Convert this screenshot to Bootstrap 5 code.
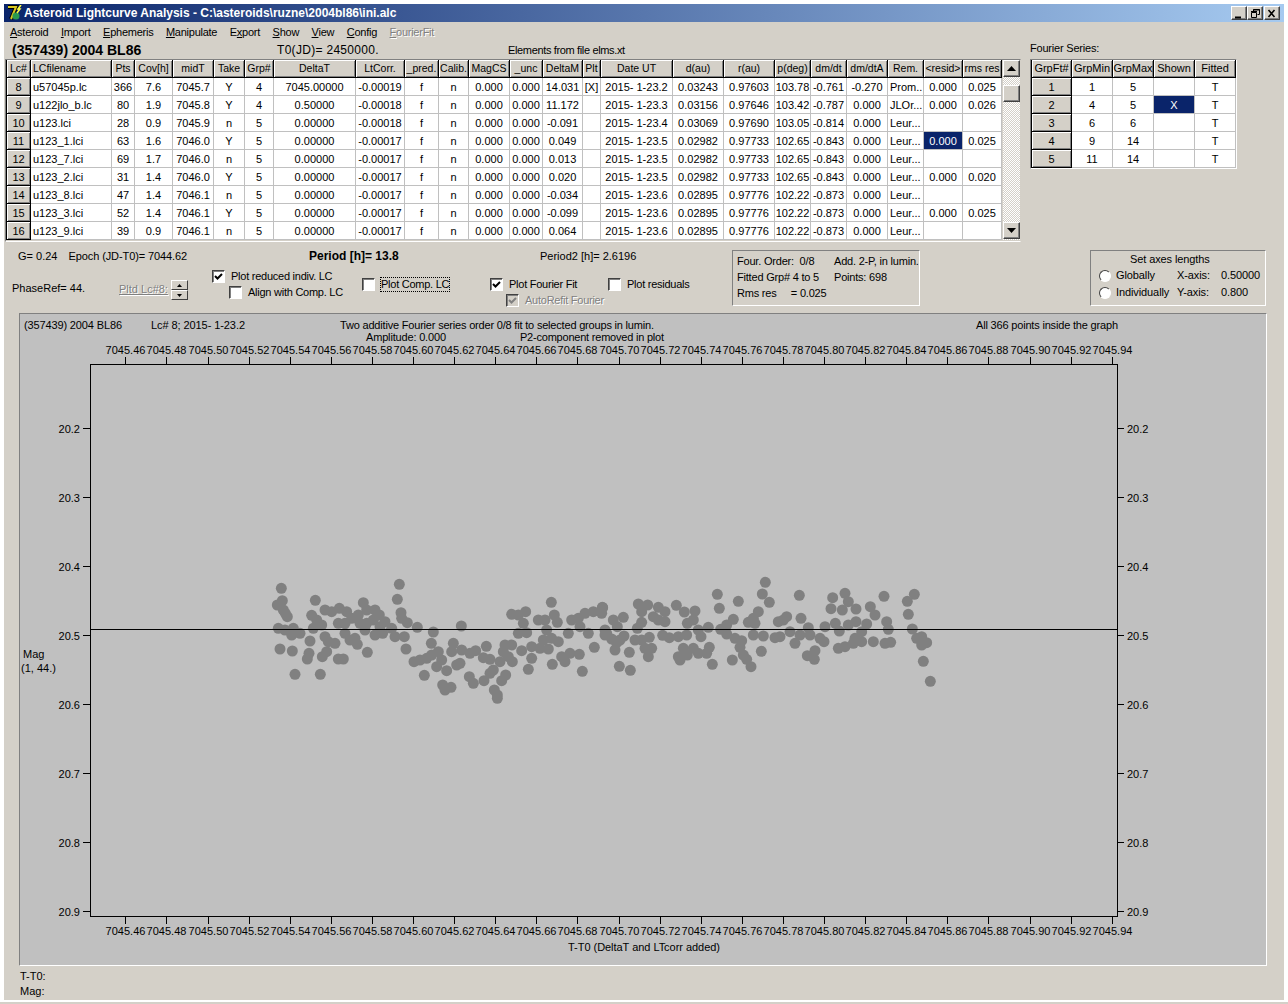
<!DOCTYPE html>
<html lang="en">

<head>
  <meta charset="UTF-8">
  <title>Asteroid Lightcurve Analysis</title>
  <link href="https://cdn.jsdelivr.net/npm/bootstrap@5.3.2/dist/css/bootstrap.min.css" rel="stylesheet">
  <style>
    html, body { height: 1004px; overflow: hidden; background: #fff; }
    body { font: 11px/13px "Liberation Sans", Arial, sans-serif; color: #000; }
    .app { margin: 4px 4px 0; width: 1280px; height: 996px; background: #d4d0c8; }
    .strip { height: 2px; margin-top: 2px; background: #d4d0c8; }

    /* title bar */
    .titlebar { height: 18px; padding: 0 4px 0 1px; color: #fff; font-weight: 700; font-size: 12px; background: linear-gradient(90deg, #0a246a, #a6caf0); }
    .titlebar > svg { margin-right: 1px; }
    .winbtn { width: 16px; height: 14px; background: #d4d0c8; border: 1px solid; border-color: #fff #404040 #404040 #fff; box-shadow: inset -1px -1px 0 #808080; }
    .winbtn:last-child { margin-left: 1px; }

    /* menu */
    .menubar { height: 19px; padding: 1px 0 0 6px; gap: 12.5px; letter-spacing: -.25px; }
    .menubar u { text-underline-offset: 1px; }
    .off { color: #808080; text-shadow: 1px 1px 0 #fff; }

    /* top area */
    .left-col { width: 1026px; }
    .info { height: 18px; padding-top: 1px; }
    .info b { font-size: 14px; width: 273px; padding-left: 8px; }
    .info .t0 { font-size: 12px; width: 231px; letter-spacing: .3px; }
    .info .elems { letter-spacing: -.35px; }
    .right-col .info { padding: 0 0 3px; letter-spacing: -.2px; }
    .gridbox { margin-left: 1px; height: 183px; width: 1016px; background: #d4d0c8; border: 1px solid; border-color: #808080 #d4d0c8 #fff #808080; }
    .wgrid { table-layout: fixed; border-collapse: separate; border-spacing: 0; background: #fff; }
    .wgrid th, .wgrid td { height: 18px; padding: 0; text-align: center; font-weight: 400; white-space: nowrap; overflow: hidden; border-right: 1px solid #c0c0c0; border-bottom: 1px solid #c0c0c0; }
    .wgrid tbody th, .wgrid tbody td { padding-top: 1px; }
    .wgrid th { background: #d4d0c8; border-color: #000; box-shadow: inset 1px 1px 0 #fff, inset -1px -1px 0 #808080; }
    #lcGrid thead th { font-size: 10.5px; }
    .wgrid .l { text-align: left; padding-left: 2px; }
    .wgrid td.sel { background: #0a246a; color: #fff; }
    .dark-left th:first-child { border-left: 1px solid #000; }

    .scroll { width: 17px; height: 180px; margin-left: 1px; background: repeating-conic-gradient(#fff 0 25%, #d4d0c8 0 50%) 0 0 / 2px 2px; }
    .sbtn { height: 17px; background: #d4d0c8; border: 1px solid; border-color: #fff #404040 #404040 #fff; box-shadow: inset -1px -1px 0 #808080; }
    .thumb { margin-top: 8px; }
    .sdown { margin-top: 120px; }
    .fgrid { width: 207px; border: 1px solid; border-color: #808080 #fff #fff #808080; }

    /* controls */
    .controls { height: 71px; }
    .c1 { width: 203px; }
    .c2 { width: 273px; }
    .c3 { width: 252px; }
    .pline { height: 26px; padding-top: 8px; }
    .c1 .pline { height: 28px; padding-left: 14px; }
    .c1 .pline span { margin-left: 8px; letter-spacing: -.1px; }
    .c2 .pline { padding-left: 102px; font-weight: 700; font-size: 12px; }
    .c3 .pline { padding-left: 60px; }
    .phase { padding: 10px 0 0 8px; }
    .phase > span:first-child { width: 107px; padding-top: 2px; }
    .phase .off { padding-top: 3px; }
    .spin { width: 17px; height: 19px; margin-left: 3px; }
    .spin i { display: block; height: 10px; background: #d4d0c8; border: 1px solid; border-color: #fff #404040 #404040 #fff; }
    .chk { width: 13px; height: 13px; flex: none; background: #fff; border: 1px solid; border-color: #404040 #fff #fff #404040; box-shadow: inset 1px 1px 0 #808080; letter-spacing: 0; }
    .chk.dis { background: #d4d0c8; }
    .lb { gap: 6px; height: 16px; letter-spacing: -.25px; }
    .focus { outline: 1px dotted #000; }
    .stack { width: 155px; padding-left: 5px; }
    .stack .lb + .lb { margin-left: 17px; }
    .c3 .rowchk { padding-left: 10px; }
    .c3 .w118 { width: 118px; }
    .c3 .auto { margin-left: 26px; }
    .gbox { height: 56px; margin-top: 8px; border: 1px solid; border-color: #808080 #fff #fff #808080; }
    .four { width: 188px; padding: 2px 0 0 4px; line-height: 16px; letter-spacing: -.2px; white-space: nowrap; }
    .four span { width: 97px; }
    .axes { width: 176px; margin-left: 170px; padding: 0 0 0 8px; line-height: 17px; letter-spacing: -.1px; }
    .axes .ttl { padding-left: 31px; line-height: 16px; }
    .axes .rad { width: 78px; gap: 5px; }
    .axes .xl { width: 44px; }
    .radio { width: 12px; height: 12px; border-radius: 50%; background: #fff; border: 1px solid; border-color: #404040 #fff #fff #404040; }

    /* plot */
    .plot { margin-left: 15px; width: 1248px; height: 653px; background: #c0c0c0; border: 1px solid; border-color: #808080 #fff #fff #808080; }
    .plot svg { display: block; font: 11px "Liberation Sans", Arial, sans-serif; }
    .status { padding: 3px 0 0 16px; line-height: 15px; }
  </style>
</head>

<body>

  <div class="app">
    <div class="titlebar d-flex align-items-center">
      <svg width="18" height="16" viewBox="0 0 18 16">
        <path d="M3 2h8L6 14" fill="none" stroke="#000" stroke-width="4"/>
        <path d="M3 2h8L6 14" fill="none" stroke="#d8c820" stroke-width="2"/>
        <circle cx="11" cy="11" r="3.5" fill="#2a9a50"/>
        <path d="M16 0l-3 4 2 0-3 4" fill="none" stroke="#ffff40" stroke-width="1.5"/>
      </svg>
      <span>Asteroid Lightcurve Analysis - C:\asteroids\ruzne\2004bl86\ini.alc</span>
      <div class="ms-auto d-flex">
        <div class="winbtn"><svg width="14" height="12" viewBox="0 0 14 12"><path d="M3 9.5h6" stroke="#000" stroke-width="2"/></svg></div>
        <div class="winbtn"><svg width="14" height="12" viewBox="0 0 14 12"><path d="M5.5 3.5V1.5h6v5h-2M3.5 4.5h5v5h-5z M3 3.5h6" fill="none" stroke="#000"/><path d="M5 2h7" stroke="#000"/></svg></div>
        <div class="winbtn"><svg width="14" height="12" viewBox="0 0 14 12"><path d="M3.5 2l6 7M9.5 2l-6 7" stroke="#000" stroke-width="1.6"/></svg></div>
      </div>
    </div>

    <nav class="menubar d-flex align-items-center">
      <span><u>A</u>steroid</span><span><u>I</u>mport</span><span><u>E</u>phemeris</span><span><u>M</u>anipulate</span><span>E<u>x</u>port</span><span><u>S</u>how</span><span><u>V</u>iew</span><span><u>C</u>onfig</span><span class="off"><u>F</u>ourierFit</span>
    </nav>

    <div class="d-flex">
      <div class="left-col">
        <div class="info d-flex align-items-center">
          <b>(357439) 2004 BL86</b>
          <span class="t0">T0(JD)= 2450000.</span>
          <span class="elems">Elements from file elms.xt</span>
        </div>
        <div class="gridbox d-flex align-items-start">
          <table class="wgrid dark-left" id="lcGrid"></table>
          <div class="scroll">
            <div class="sbtn d-flex align-items-center justify-content-center"><svg width="9" height="5"><path d="M4.5 0L9 5H0z"/></svg></div>
            <div class="sbtn thumb"></div>
            <div class="sbtn sdown d-flex align-items-center justify-content-center"><svg width="9" height="5"><path d="M4.5 5L9 0H0z"/></svg></div>
          </div>
        </div>
      </div>
      <div class="right-col">
        <div class="info d-flex align-items-center">Fourier Series:</div>
        <div class="fgrid"><table class="wgrid dark-left" id="fourierGrid"></table></div>
      </div>
    </div>

    <div class="controls d-flex">
      <div class="c1">
        <div class="pline">G= 0.24 <span>Epoch (JD-T0)= 7044.62</span></div>
        <div class="phase d-flex">
          <span>PhaseRef= 44.</span>
          <span class="off"><u>Pltd Lc#8:</u></span>
          <div class="spin">
            <i class="d-flex align-items-center justify-content-center"><svg width="5" height="3"><path d="M2.5 0L5 3H0z"/></svg></i>
            <i class="d-flex align-items-center justify-content-center"><svg width="5" height="3"><path d="M2.5 3L5 0H0z"/></svg></i>
          </div>
        </div>
      </div>

      <div class="c2">
        <div class="pline">Period [h]= 13.8</div>
        <div class="d-flex align-items-center">
          <div class="stack">
            <div class="lb d-flex align-items-center"><span class="chk check"></span>Plot reduced indiv. LC</div>
            <div class="lb d-flex align-items-center"><span class="chk"></span>Align with Comp. LC</div>
          </div>
          <div class="lb d-flex align-items-center"><span class="chk"></span><span class="focus">Plot Comp. LC</span></div>
        </div>
      </div>

      <div class="c3">
        <div class="pline">Period2 [h]= 2.6196</div>
        <div class="rowchk d-flex pt-2">
          <div class="lb w118 d-flex align-items-center"><span class="chk check"></span>Plot Fourier Fit</div>
          <div class="lb d-flex align-items-center"><span class="chk"></span>Plot residuals</div>
        </div>
        <div class="lb auto d-flex align-items-center off"><span class="chk dis check gray"></span>AutoRefit Fourier</div>
      </div>

      <div class="gbox four">
        <div class="d-flex"><span>Four. Order: &nbsp;0/8</span>Add. 2-P, in lumin.</div>
        <div class="d-flex"><span>Fitted Grp# 4 to 5</span>Points: 698</div>
        <div>Rms res &nbsp; &nbsp; = 0.025</div>
      </div>

      <div class="gbox axes">
        <div class="ttl">Set axes lengths</div>
        <div class="d-flex"><span class="rad d-flex align-items-center"><span class="radio"></span>Globally</span><span class="xl">X-axis:</span>0.50000</div>
        <div class="d-flex"><span class="rad d-flex align-items-center"><span class="radio"></span>Individually</span><span class="xl">Y-axis:</span>0.800</div>
      </div>
    </div>

    <div class="plot">
      <svg id="chart" width="1246" height="651" viewBox="20 314 1246 651"></svg>
    </div>

    <div class="status">T-T0:<br>Mag:</div>
  </div>
  <div class="strip"></div>

  <script src="https://cdn.jsdelivr.net/npm/bootstrap@5.3.2/dist/js/bootstrap.bundle.min.js"></script>
  <script>
    // main grid
    const heads = ["Lc#","LCfilename","Pts","Cov[h]","midT","Take","Grp#","DeltaT","LtCorr.","_pred.","Calib.","MagCS","_unc","DeltaM","Plt","Date UT","d(au)","r(au)","p(deg)","dm/dt","dm/dtA","Rem.","<resid>","rms res"];
    const widths = [25,81,23,38,41,31,29,82,49,34,30,41,33,40,18,72,51,51,36,36,41,36,39,39];
    const d23 = ["2015- 1-23.5","0.02982","0.97733","102.65","-0.843","0.000","Leur..."];
    const d26 = ["2015- 1-23.6","0.02895","0.97776","102.22","-0.873","0.000","Leur..."];
    const rows = [
      ["8","u57045p.lc","366","7.6","7045.7","Y","4","7045.00000","-0.00019","14.031","[X]","2015- 1-23.2","0.03243","0.97603","103.78","-0.761","-0.270","Prom...","0.000","0.025"],
      ["9","u122jlo_b.lc","80","1.9","7045.8","Y","4","0.50000","-0.00018","11.172","","2015- 1-23.3","0.03156","0.97646","103.42","-0.787","0.000","JLOr...","0.000","0.026"],
      ["10","u123.lci","28","0.9","7045.9","n","5","0.00000","-0.00018","-0.091","","2015- 1-23.4","0.03069","0.97690","103.05","-0.814","0.000","Leur...","",""],
      ["11","u123_1.lci","63","1.6","7046.0","Y","5","0.00000","-0.00017","0.049","",...d23,"0.000","0.025"],
      ["12","u123_7.lci","69","1.7","7046.0","n","5","0.00000","-0.00017","0.013","",...d23,"",""],
      ["13","u123_2.lci","31","1.4","7046.0","Y","5","0.00000","-0.00017","0.020","",...d23,"0.000","0.020"],
      ["14","u123_8.lci","47","1.4","7046.1","n","5","0.00000","-0.00017","-0.034","",...d26,"",""],
      ["15","u123_3.lci","52","1.4","7046.1","Y","5","0.00000","-0.00017","-0.099","",...d26,"0.000","0.025"],
      ["16","u123_9.lci","39","0.9","7046.1","n","5","0.00000","-0.00017","0.064","",...d26,"",""]
    ];

    function esc(s){
      return s.replace(/</g,"&lt;").replace(/>/g,"&gt;");
    }

    function fillGrid(id, heads, widths, rows, cellClass){
      let html = "<colgroup>" + widths.map(w => `<col style="width:${w}px">`).join("") + "</colgroup>";
      html += "<thead><tr>" + heads.map((h,i) => `<th class="${i==1 && id=="lcGrid" ? "l" : ""}">${esc(h)}</th>`).join("") + "</tr></thead><tbody>";
      rows.forEach((r,ri) => {
        html += "<tr>" + r.map((c,i) => i==0 ? `<th>${c}</th>` : `<td class="${cellClass(ri,i)}">${c}</td>`).join("") + "</tr>";
      });
      document.getElementById(id).innerHTML = html + "</tbody>";
      document.getElementById(id).style.width = widths.reduce((a,b)=>a+b,0) + "px";
    }

    // _pred, Calib, MagCS and _unc repeat on every row
    const fullRows = rows.map(r => [...r.slice(0,9),"f","n","0.000","0.000",...r.slice(9)]);
    fillGrid("lcGrid", heads, widths, fullRows, (r,i) => {
      if (r==3 && i==22) return "sel";
      return (i==1 || i==21) ? "l" : "";
    });

    fillGrid("fourierGrid", ["GrpFt#","GrpMin","GrpMax","Shown","Fitted"], [41,41,41,41,41], [
      ["1","1","5","","T"],["2","4","5","X","T"],["3","6","6","","T"],["4","9","14","","T"],["5","11","14","","T"]
    ], (r,i) => (r==1 && i==3) ? "sel" : "");

    // tick marks in the checked boxes
    document.querySelectorAll(".chk.check").forEach(b => {
      let col = b.classList.contains("gray") ? "#808080" : "#000";
      b.innerHTML = `<svg width="11" height="11" viewBox="0 0 11 11" style="display:block"><path d="M2 5l2.5 2.5L9 3" fill="none" stroke="${col}" stroke-width="2"/></svg>`;
    });

    // chart, drawn in page coordinates
    const left = [64,85,67,122,52,135,70,150,76,160,82,170,55,205,75,210,95,225,100,205,120,220,60,267,97,273,150,243,105,343,181,343,166,121,155,166,170,180,185,195,160,205,195,150,215,155,238,145,260,155,235,190,255,190,195,230,205,245,225,250,147,280,142,297,200,275,187,290,235,297,250,297,322,277,255,220,270,240,285,235,292,253,310,128,275,175,295,165,320,150,345,150,358,165,375,185,300,190,320,190,340,180,360,200,315,210,345,225,368,220,395,205,405,230,433,230,418,73,412,118,423,158,425,175,442,188,472,202,520,216,604,198,514,250,438,267,462,305,480,300,500,295,515,285,535,275,545,300,530,320,560,332,590,315,600,310,493,346,580,250,575,275,605,270,630,280,647,272,679,259,670,293,690,298,700,330,690,340,628,350,640,370,672,362,548,375,555,390,573,382,703,390,712,405,712,415,737,345,725,362,720,305,745,290,757,305,735,255,730,275,755,255,785,272,815,260,840,265,865,267,815,295,805,328,877,313,915,305,905,290,930,280,958,283,967,334,1003,262,755,163,775,165,797,155,790,190,775,220,800,218,835,180,855,180,874,127,883,165,892,187,860,210,850,240,875,235,895,245,925,220,935,180,955,175,975,160,1000,155,1027,142,960,200,985,220,1040,220];
    const right = [8,143,5,160,15,210,15,225,35,237,60,240,72,228,50,248,45,270,88,277,58,319,91,331,40,180,70,172,52,200,112,205,125,187,115,132,143,135,125,155,160,170,175,142,195,155,175,180,195,185,229,136,253,156,285,153,280,180,262,190,105,240,125,240,148,232,135,265,155,265,145,290,188,226,208,233,235,230,260,225,295,210,303,230,325,202,250,265,235,290,240,300,262,285,280,265,295,280,320,280,328,262,337,313,352,103,358,145,415,124,400,178,380,195,362,208,380,222,405,235,425,242,420,262,430,285,440,298,453,320,397,300,445,187,460,175,475,155,465,190,496,67,487,102,508,127,484,274,460,225,490,228,525,233,535,185,560,170,550,180,603,175,540,230,570,215,600,225,585,250,625,203,630,225,598,106,660,235,672,245,675,200,622,287,645,272,643,298,693,146,698,113,735,100,745,125,727,150,768,147,706,190,718,213,745,195,768,185,800,192,785,215,765,235,785,245,760,250,735,260,715,265,820,245,855,250,872,247,811,140,825,165,860,185,865,208,852,109,943,103,922,124,925,163,937,207,950,235,965,230,965,255,980,248,970,304,991,364];

    let svg = "";
    function text(x, y, s, anchor, len){
      svg += `<text x="${x}" y="${y}"${anchor ? ` text-anchor="${anchor}"` : ""}${len ? ` textLength="${len}"` : ""}>${s}</text>`;
    }
    function line(x1, y1, x2, y2){
      svg += `<line x1="${x1}" y1="${y1}" x2="${x2}" y2="${y2}" stroke="#000" shape-rendering="crispEdges"/>`;
    }

    for (let i = 0; i < left.length; i += 2)
      svg += `<circle cx="${260 + left[i]/3}" cy="${560 + left[i+1]/3}" r="5.5" fill="#808080"/>`;
    for (let i = 0; i < right.length; i += 2)
      svg += `<circle cx="${600 + right[i]/3}" cy="${560 + right[i+1]/3}" r="5.5" fill="#808080"/>`;

    svg += `<rect x="90.5" y="364.5" width="1027" height="552" fill="none" stroke="#000" shape-rendering="crispEdges"/>`;
    line(90, 629.5, 1117, 629.5);

    for (let i = 0; i <= 24; i++){
      let x = Math.round(125.3 + i*41.1) + .5;
      let v = (7045.46 + i*0.02).toFixed(2);
      line(x, 357, x, 364);
      line(x, 917, x, 924);
      text(x, 354, v, "middle");
      text(x, 935, v, "middle");
    }
    for (let i = 0; i < 8; i++){
      let y = 428.5 + i*69;
      let v = (20.2 + i*0.1).toFixed(1);
      line(83, y, 90, y);
      line(1118, y, 1124, y);
      text(80, y+4, v, "end");
      text(1127, y+4, v);
    }

    text(24, 329, "(357439) 2004 BL86", "", 98);
    text(151, 329, "Lc# 8; 2015- 1-23.2", "", 94);
    text(340, 329, "Two additive Fourier series order 0/8 fit to selected groups in lumin.", "", 314);
    text(976, 329, "All 366 points inside the graph", "", 142);
    text(366, 341, "Amplitude: 0.000", "", 80);
    text(520, 341, "P2-component removed in plot", "", 144);
    text(23, 658, "Mag");
    text(21, 672, "(1, 44.)");
    text(568, 951, "T-T0 (DeltaT and LTcorr added)", "", 152);

    document.getElementById("chart").innerHTML = svg;
  </script>

</body>

</html>
